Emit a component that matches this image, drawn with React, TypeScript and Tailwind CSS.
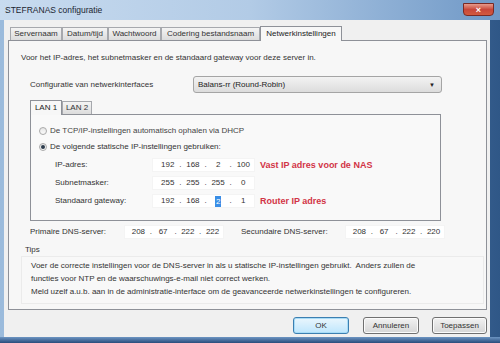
import React from 'react';

const font = { fontFamily: '"Liberation Sans", Arial, sans-serif' };

function Tab({ label, w, active }: { label: string; w: string; active?: boolean }) {
  return (
    <div
      className={
        active
          ? `${w} h-[15px] -mb-px z-10 flex items-center justify-center border border-b-0 border-[#8e9198] bg-[#f7f7f7] text-[#222]`
          : `${w} h-[13px] flex items-center justify-center border border-b-0 border-[#a6a8ad] bg-gradient-to-b from-[#f4f4f4] to-[#dcdcdc] text-[#333]`
      }
    >
      {label}
    </div>
  );
}

function IpField({ parts, w, pad, pitch, sel }: { parts: string[]; w: string; pad: string; pitch: string; sel?: number }) {
  return (
    <div className={`${w} ${pad} h-[14px] bg-white border border-[#f4f4f4] flex items-center text-[#333]`}>
      {parts.map((p, i) => (
        <React.Fragment key={i}>
          <div className={`${pitch} flex justify-center`}>
            {i === sel ? <span className="bg-[#3a8ee6] text-white px-[1px] leading-[11px]">{p}</span> : p}
          </div>
          {i < 3 && <div className="w-[4px] text-center">.</div>}
        </React.Fragment>
      ))}
    </div>
  );
}

function Radio({ on }: { on?: boolean }) {
  return (
    <div className="w-[8px] h-[8px] rounded-full border border-[#a9a9a9] bg-gradient-to-b from-[#e6e6e6] to-[#fafafa] flex items-center justify-center">
      {on && <div className="w-[4px] h-[4px] rounded-full bg-[#2c3b4c]" />}
    </div>
  );
}

function Btn({ label, w, def }: { label: string; w: string; def?: boolean }) {
  return (
    <div
      className={`${w} h-[17px] rounded-[3px] flex items-center justify-center text-[#333] ${
        def
          ? 'border border-[#3c7fb1] bg-gradient-to-b from-[#eaf6fd] to-[#bee6fd] shadow-[inset_0_0_0_1px_#a8dcf7]'
          : 'border border-[#707070] bg-gradient-to-b from-[#f2f2f2] to-[#d6d6d6] shadow-[inset_0_0_0_1px_#fbfbfb]'
      }`}
    >
      {label}
    </div>
  );
}

export default function App() {
  return (
    <div
      className="w-[500px] h-[343px] overflow-hidden flex flex-col text-[8px] leading-[10px] bg-gradient-to-r from-[#9bbbdc] via-[#86a9d0] to-[#2f5787]"
      style={font}
    >
      {/* Title bar */}
      <div className="h-[20px] flex justify-between bg-gradient-to-r from-[#c8dbef] via-[#b2cbe6] to-[#6f98c6]">
        <div className="pl-[5px] flex items-center text-[8.5px] text-[#1b2530]">STEFRANAS configuratie</div>
        <div className="mr-[6px] mt-[3px] w-[31px] h-[13px] rounded-b-[4px] border border-[#7a2a24] bg-gradient-to-b from-[#e69a8c] via-[#c8473a] to-[#d25a3f] flex items-center justify-center text-white text-[9px] font-bold">
          ×
        </div>
      </div>

      <div className="flex flex-1">
        <div className="w-[4px]" />
        {/* Dialog body */}
        <div className="w-[486px] bg-[#f0f0f0] pt-[6px] pl-[4px] pr-[3px] flex flex-col">
          {/* Tabs */}
          <div className="flex items-end pl-[2px] h-[14px]">
            <Tab label="Servernaam" w="w-[52px]" />
            <Tab label="Datum/tijd" w="w-[46px]" />
            <Tab label="Wachtwoord" w="w-[53px]" />
            <Tab label="Codering bestandsnaam" w="w-[99px]" />
            <Tab label="Netwerkinstellingen" w="w-[82px]" active />
          </div>

          {/* Tab panel */}
          <div className="h-[270px] border border-[#8e9198] bg-[#f7f7f7] flex flex-col pt-[12px] text-[#333]">
            <div className="ml-[12px]">Voor het IP-adres, het subnetmasker en de standaard gateway voor deze server in.</div>

            <div className="mt-[13px] h-[17px] flex items-center">
              <div className="ml-[21px] w-[163px]">Configuratie van netwerkinterfaces</div>
              <div className="w-[249px] h-[17px] rounded-[3px] border border-[#a5a5a5] bg-gradient-to-b from-[#f3f3f3] to-[#dcdcdc] flex items-center justify-between pl-[4px] pr-[6px]">
                <span className="text-[#222]">Balans-rr (Round-Robin)</span>
                <span className="text-[6px] text-[#222]">▼</span>
              </div>
            </div>

            {/* LAN tabs */}
            <div className="mt-[6px] ml-[21px] w-[411px] flex flex-col">
              <div className="flex items-end h-[15px]">
                <Tab label="LAN 1" w="w-[32px]" active />
                <Tab label="LAN 2" w="w-[30px]" />
              </div>
              <div className="h-[107px] border border-[#8e9198] bg-[#f9f9f9] flex flex-col">
                <div className="mt-[11px] ml-[8px] flex items-center gap-[3px] text-[#444]">
                  <Radio />
                  <span>De TCP/IP-instellingen automatisch ophalen via DHCP</span>
                </div>
                <div className="mt-[6px] ml-[8px] flex items-center gap-[3px]">
                  <Radio on />
                  <span>De volgende statische IP-instellingen gebruiken:</span>
                </div>
                <div className="mt-[6px] flex items-center h-[14px]">
                  <div className="ml-[24px] w-[97px]">IP-adres:</div>
                  <IpField parts={['192', '168', '2', '100']} w="w-[103px]" pad="pl-[4px]" pitch="w-[22px]" />
                  <div className="ml-[5px] text-[9px] font-bold text-[#d23446]">Vast IP adres voor de NAS</div>
                </div>
                <div className="mt-[4px] flex items-center h-[14px]">
                  <div className="ml-[24px] w-[97px]">Subnetmasker:</div>
                  <IpField parts={['255', '255', '255', '0']} w="w-[103px]" pad="pl-[4px]" pitch="w-[22px]" />
                </div>
                <div className="mt-[4px] flex items-center h-[14px]">
                  <div className="ml-[24px] w-[97px]">Standaard gateway:</div>
                  <IpField parts={['192', '168', '2', '1']} w="w-[103px]" pad="pl-[4px]" pitch="w-[22px]" sel={2} />
                  <div className="ml-[5px] text-[9px] font-bold text-[#d23446]">Router IP adres</div>
                </div>
              </div>
            </div>

            {/* DNS */}
            <div className="mt-[4px] h-[14px] flex items-center">
              <div className="ml-[21px] w-[94px]">Primaire DNS-server:</div>
              <IpField parts={['208', '67', '222', '222']} w="w-[100px]" pad="pl-[3px]" pitch="w-[21px]" />
              <div className="ml-[17px] w-[104px]">Secundaire DNS-server:</div>
              <IpField parts={['208', '67', '222', '220']} w="w-[100px]" pad="pl-[3px]" pitch="w-[21px]" />
            </div>

            {/* Tips */}
            <div className="mt-[6px] ml-[16px]">Tips</div>
            <div className="mt-[1px] ml-[12px] w-[463px] border border-[#ebebeb] bg-[#f8f8f8] pt-[2px] pb-[5px] pl-[9px] leading-[13px]">
              <div>
                Voer de correcte instellingen voor de DNS-server in als u statische IP-instellingen gebruikt.&nbsp; Anders zullen de
                <br />
                functies voor NTP en de waarschuwings-e-mail niet correct werken.
              </div>
              <div>Meld uzelf a.u.b. aan in de administratie-interface om de geavanceerde netwerkinstellingen te configureren.</div>
            </div>
          </div>

          {/* Buttons */}
          <div className="mt-[7px] flex justify-end">
            <Btn label="OK" w="w-[56px]" def />
            <div className="w-[14px]" />
            <Btn label="Annuleren" w="w-[56px]" />
            <div className="w-[13px]" />
            <Btn label="Toepassen" w="w-[55px]" />
          </div>
        </div>
        <div className="flex-1" />
      </div>
      <div className="h-[6px] bg-gradient-to-b from-[#6d95c3] to-[#2a4d7c]" />
    </div>
  );
}
